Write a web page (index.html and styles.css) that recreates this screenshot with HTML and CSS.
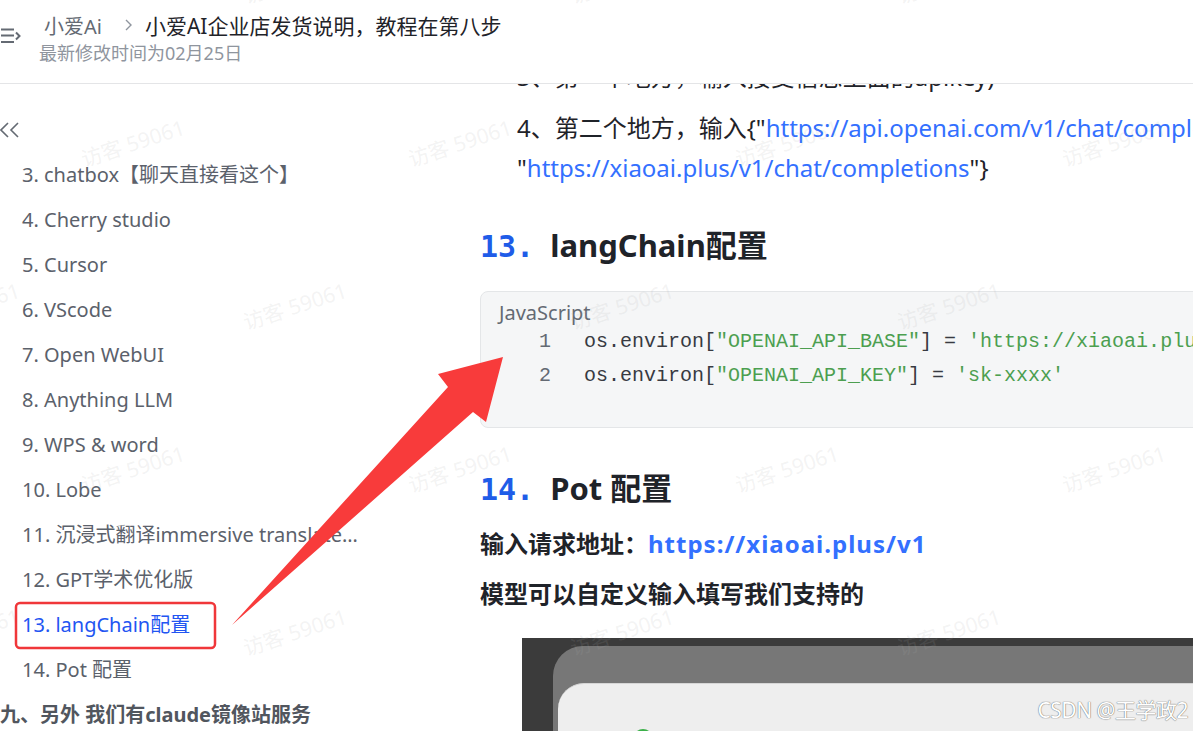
FILE: index.html
```html
<!DOCTYPE html>
<html lang="zh-CN">
<head>
    <meta charset="UTF-8">
    <meta name="viewport" content="width=device-width, initial-scale=1.0">
    <title>小爱AI企业店发货说明，教程在第八步</title>
    <link rel="stylesheet" href="styles.css">
</head>
<body>
<div class="page">
    <header class="topbar">
        <svg class="menu-icon" viewBox="0 0 22 16"><path d="M1 1.5h13M1 7.5h13M1 14h13M16 4.5l3.5 3.5-3.5 3.5" stroke="#646a73" stroke-width="2" fill="none"/></svg>
        <div class="doc-info">
            <div class="crumbs">
                <span class="crumb">小爱Ai</span>
                <svg class="crumb-sep" viewBox="0 0 8 12"><path d="M2 1l5 5-5 5" stroke="#8f959e" stroke-width="1.4" fill="none"/></svg>
                <span class="doc-title">小爱AI企业店发货说明，教程在第八步</span>
            </div>
            <div class="doc-meta">最新修改时间为02月25日</div>
        </div>
    </header>

    <div class="layout">
        <aside class="outline">
            <svg class="collapse" viewBox="0 0 20 16"><path d="M8 1L1 8l7 7M18 1l-7 7 7 7" stroke="#646a73" stroke-width="1.6" fill="none"/></svg>
            <ul class="outline-list">
                <li>3. chatbox【聊天直接看这个】</li>
                <li>4. Cherry studio</li>
                <li>5. Cursor</li>
                <li>6. VScode</li>
                <li>7. Open WebUI</li>
                <li>8. Anything LLM</li>
                <li>9. WPS &amp; word</li>
                <li>10. Lobe</li>
                <li>11. 沉浸式翻译immersive translate插件</li>
                <li>12. GPT学术优化版</li>
                <li class="active">13. langChain配置</li>
                <li>14. Pot 配置</li>
            </ul>
            <div class="outline-section">九、另外 我们有claude镜像站服务</div>
        </aside>

        <main class="doc">
            <p class="step step-cut">3、第一个地方，输入接受信息上面的apikey)</p>
            <p class="step">4、第二个地方，输入{"<a href="#">https://api.openai.com/v1/chat/completions</a>":<br>"<a href="#">https://xiaoai.plus/v1/chat/completions</a>"}</p>

            <h2><span class="num">13.</span>langChain配置</h2>
            <div class="code">
                <div class="code-lang">JavaScript</div>
                <div class="code-line"><span class="ln">1</span><code>os.environ[<span class="str">"OPENAI_API_BASE"</span>] = <span class="str">'https://xiaoai.plus/v1'</span></code></div>
                <div class="code-line"><span class="ln">2</span><code>os.environ[<span class="str">"OPENAI_API_KEY"</span>] = <span class="str">'sk-xxxx'</span></code></div>
            </div>

            <h2><span class="num">14.</span>Pot 配置</h2>
            <p class="strong">输入请求地址：<a href="#">https://xiaoai.plus/v1</a></p>
            <p class="strong">模型可以自定义输入填写我们支持的</p>

            <div class="shot">
                <div class="shot-frame">
                    <div class="shot-panel">
                        <div class="shot-dot"></div>
                    </div>
                </div>
            </div>
        </main>
    </div>

    <div class="watermarks">
        <div class="wm-row even"><span>访客 59061</span><span>访客 59061</span><span>访客 59061</span><span>访客 59061</span><span>访客 59061</span></div>
        <div class="wm-row odd"><span>访客 59061</span><span>访客 59061</span><span>访客 59061</span><span>访客 59061</span><span>访客 59061</span></div>
        <div class="wm-row even"><span>访客 59061</span><span>访客 59061</span><span>访客 59061</span><span>访客 59061</span><span>访客 59061</span></div>
        <div class="wm-row odd"><span>访客 59061</span><span>访客 59061</span><span>访客 59061</span><span>访客 59061</span><span>访客 59061</span></div>
        <div class="wm-row even"><span>访客 59061</span><span>访客 59061</span><span>访客 59061</span><span>访客 59061</span><span>访客 59061</span></div>
    </div>

    <!-- screenshot markup: box round the outline entry and arrow to the code -->
    <svg class="annotations" viewBox="0 0 1193 731">
        <rect x="16" y="603" width="199" height="45" rx="4" fill="none" stroke="#f0373a" stroke-width="2.5"/>
        <polygon points="503,357 438,374 448,387 232,625 473,412 486,422" fill="#f83b3b"/>
    </svg>

    <div class="csdn-mark">CSDN @王学政2</div>
</div>
</body>
</html>
```

FILE: styles.css
```css
* {
    margin: 0;
    padding: 0;
    box-sizing: border-box;
}

body {
    font-family: "Noto Sans", "Noto Sans CJK SC", sans-serif;
    background: #fff;
    color: #1f2329;
    overflow: hidden;
}

.page {
    position: relative;
    width: 100%;
    height: 731px;
    overflow: hidden;
}

/* top bar */
.topbar {
    display: flex;
    align-items: flex-start;
    height: 84px;
    padding-top: 10px;
    border-bottom: 1px solid #e4e5e7;
}

.menu-icon {
    flex: none;
    width: 22px;
    height: 16px;
    margin-top: 18px;
}

.doc-info {
    margin-left: 17px;
}

.crumbs {
    display: flex;
    align-items: center;
    height: 30px;
    padding-left: 5px;
}

.crumb {
    font-size: 20px;
    color: #646a73;
}

.crumb-sep {
    width: 8px;
    height: 12px;
    margin: 0 13px 0 22px;
}

.doc-title {
    font-size: 21px;
    color: #1f2329;
}

.doc-meta {
    font-size: 18px;
    line-height: 26px;
    color: #8f959e;
}

/* body */
.layout {
    display: flex;
    height: 647px;
}

.outline {
    flex: none;
    width: 480px;
}

.collapse {
    display: block;
    width: 20px;
    height: 16px;
    margin-top: 38px;
}

.outline-list {
    list-style: none;
    margin-top: 14px;
}

.outline-list li {
    width: 362px;
    height: 45px;
    line-height: 45px;
    padding-left: 22px;
    font-size: 20px;
    color: #5b616b;
    white-space: nowrap;
    overflow: hidden;
    text-overflow: ellipsis;
}

.outline-list li.active {
    color: #2255f2;
}

.outline-section {
    font-size: 20px;
    font-weight: 700;
    line-height: 45px;
    color: #51565e;
    white-space: nowrap;
}

.doc {
    flex: 1;
    min-width: 0;
    overflow: hidden;
}

.doc a {
    color: #3370ff;
    text-decoration: none;
}

.step {
    font-size: 24px;
    line-height: 40px;
    padding-left: 37px;
    white-space: nowrap;
}

.step-cut {
    margin-top: -27px;
    margin-bottom: 11px;
}

h2 {
    margin-top: 35px;
    font-size: 31px;
    line-height: 44px;
    font-weight: 700;
    white-space: nowrap;
}

.num {
    font-family: "DejaVu Sans Mono", monospace;
    font-size: 30px;
    color: #1f5ce8;
    margin-right: 16px;
}

.code {
    width: 900px;
    margin-top: 22px;
    padding: 9px 0 34px 18px;
    background: #f5f6f7;
    border: 1px solid #e4e6e8;
    border-radius: 8px;
}

.code-lang {
    font-size: 20px;
    line-height: 24px;
    color: #646a73;
}

.code-line {
    display: flex;
    font-family: "Liberation Mono", monospace;
    font-size: 20px;
    line-height: 34px;
    color: #383a42;
    white-space: pre;
}

.code-line code {
    font-family: inherit;
}

.ln {
    width: 52px;
    margin-right: 33px;
    text-align: right;
    color: #646a73;
}

.str {
    color: #4c9f50;
}

.code + h2 {
    margin-top: 38px;
}

.strong {
    margin-top: 12px;
    font-size: 24px;
    font-weight: 700;
    line-height: 40px;
    white-space: nowrap;
}

.strong + .strong {
    margin-top: 10px;
}

.strong a {
    letter-spacing: 1px;
}

/* embedded screenshot */
.shot {
    width: 800px;
    height: 160px;
    margin: 24px 0 0 42px;
    padding: 8px 0 0 31px;
    background: #3b3b3b;
}

.shot-frame {
    height: 100%;
    padding: 37px 0 0 5px;
    background: #777;
    border-radius: 30px 0 0 0;
}

.shot-panel {
    height: 100%;
    padding: 45px 0 0 75px;
    background: #eeeeee;
    border-top: 1px solid #d6d6d6;
    border-radius: 26px 0 0 0;
}

.shot-dot {
    width: 20px;
    height: 20px;
    border-radius: 50%;
    background: #3cb04a;
}

/* overlays */
.watermarks {
    position: absolute;
    top: -103px;
    left: 0;
    right: 0;
    bottom: 0;
    display: flex;
    flex-direction: column;
    pointer-events: none;
}

.wm-row {
    flex: none;
    display: flex;
    align-items: center;
    height: 163px;
}

.wm-row.even {
    margin-left: -196px;
}

.wm-row.odd {
    margin-left: -31px;
}

.wm-row span {
    flex: none;
    width: 327px;
    text-align: center;
    font-size: 21px;
    color: rgba(170, 170, 170, 0.15);
    transform: rotate(-18deg);
}

.annotations {
    position: absolute;
    top: 0;
    left: 0;
    width: 1193px;
    height: 731px;
    pointer-events: none;
}

.csdn-mark {
    position: absolute;
    right: 5px;
    bottom: 7px;
    font-size: 21px;
    color: #fff;
    letter-spacing: -0.5px;
    text-shadow: 0 0 1px #6f6f6f, 0 0 1px #6f6f6f;
}
```
